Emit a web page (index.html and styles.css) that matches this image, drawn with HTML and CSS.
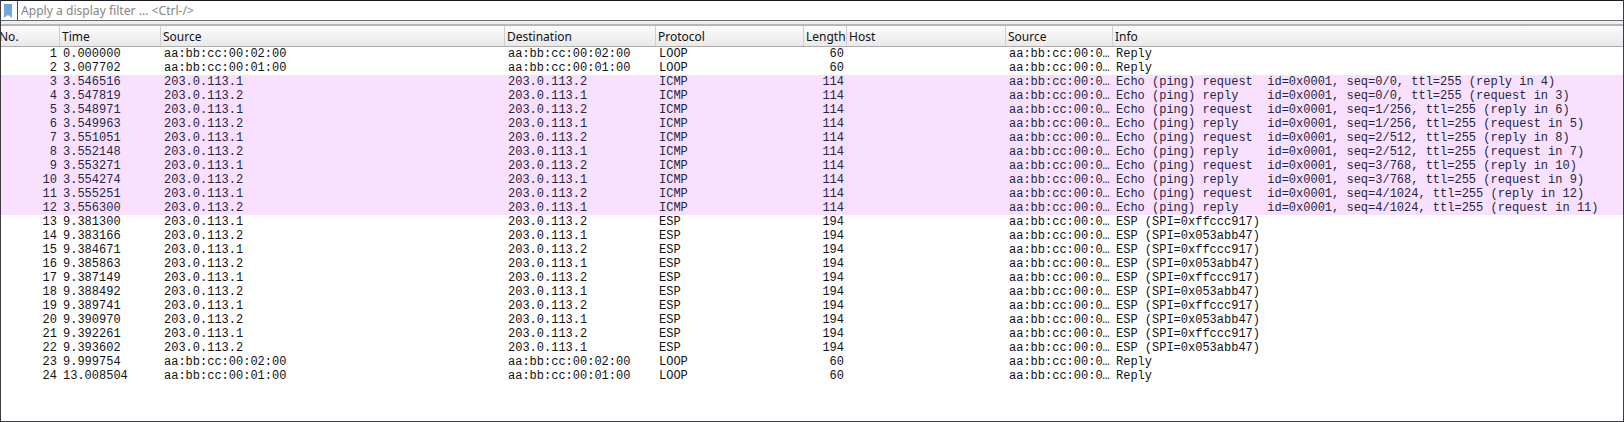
FILE: index.html
```html
<!DOCTYPE html>
<html lang="en">
<head>
<meta charset="utf-8">
<title>Packet list</title>
<link rel="stylesheet" href="styles.css">
</head>
<body>
<main class="window">
<div class="filter">
<svg class="bookmark" viewBox="0 0 8 14" width="8" height="14"><defs><linearGradient id="blue" x1="0" y1="0" x2="0" y2="1"><stop offset="0" stop-color="#6d9fd8"/><stop offset="1" stop-color="#7fabdd"/></linearGradient></defs><path d="M0 0H8V14L4 11L0 14Z" fill="url(#blue)"/></svg>
<span class="placeholder">Apply a display filter ... &lt;Ctrl-/&gt;</span>
</div>
<div class="splitter"></div>
<div class="row head"><span class="no">No.</span><span>Time</span><span>Source</span><span>Destination</span><span>Protocol</span><span>Length</span><span>Host</span><span>Source</span><span>Info</span></div>
<div class="row"><span class="num">1</span><span>0.000000</span><span>aa:bb:cc:00:02:00</span><span>aa:bb:cc:00:02:00</span><span>LOOP</span><span class="num">60</span><span></span><span>aa:bb:cc:00:0…</span><span>Reply</span></div>
<div class="row"><span class="num">2</span><span>3.007702</span><span>aa:bb:cc:00:01:00</span><span>aa:bb:cc:00:01:00</span><span>LOOP</span><span class="num">60</span><span></span><span>aa:bb:cc:00:0…</span><span>Reply</span></div>
<div class="row icmp"><span class="num">3</span><span>3.546516</span><span>203.0.113.1</span><span>203.0.113.2</span><span>ICMP</span><span class="num">114</span><span></span><span>aa:bb:cc:00:0…</span><span>Echo (ping) request  id=0x0001, seq=0/0, ttl=255 (reply in 4)</span></div>
<div class="row icmp"><span class="num">4</span><span>3.547819</span><span>203.0.113.2</span><span>203.0.113.1</span><span>ICMP</span><span class="num">114</span><span></span><span>aa:bb:cc:00:0…</span><span>Echo (ping) reply    id=0x0001, seq=0/0, ttl=255 (request in 3)</span></div>
<div class="row icmp"><span class="num">5</span><span>3.548971</span><span>203.0.113.1</span><span>203.0.113.2</span><span>ICMP</span><span class="num">114</span><span></span><span>aa:bb:cc:00:0…</span><span>Echo (ping) request  id=0x0001, seq=1/256, ttl=255 (reply in 6)</span></div>
<div class="row icmp"><span class="num">6</span><span>3.549963</span><span>203.0.113.2</span><span>203.0.113.1</span><span>ICMP</span><span class="num">114</span><span></span><span>aa:bb:cc:00:0…</span><span>Echo (ping) reply    id=0x0001, seq=1/256, ttl=255 (request in 5)</span></div>
<div class="row icmp"><span class="num">7</span><span>3.551051</span><span>203.0.113.1</span><span>203.0.113.2</span><span>ICMP</span><span class="num">114</span><span></span><span>aa:bb:cc:00:0…</span><span>Echo (ping) request  id=0x0001, seq=2/512, ttl=255 (reply in 8)</span></div>
<div class="row icmp"><span class="num">8</span><span>3.552148</span><span>203.0.113.2</span><span>203.0.113.1</span><span>ICMP</span><span class="num">114</span><span></span><span>aa:bb:cc:00:0…</span><span>Echo (ping) reply    id=0x0001, seq=2/512, ttl=255 (request in 7)</span></div>
<div class="row icmp"><span class="num">9</span><span>3.553271</span><span>203.0.113.1</span><span>203.0.113.2</span><span>ICMP</span><span class="num">114</span><span></span><span>aa:bb:cc:00:0…</span><span>Echo (ping) request  id=0x0001, seq=3/768, ttl=255 (reply in 10)</span></div>
<div class="row icmp"><span class="num">10</span><span>3.554274</span><span>203.0.113.2</span><span>203.0.113.1</span><span>ICMP</span><span class="num">114</span><span></span><span>aa:bb:cc:00:0…</span><span>Echo (ping) reply    id=0x0001, seq=3/768, ttl=255 (request in 9)</span></div>
<div class="row icmp"><span class="num">11</span><span>3.555251</span><span>203.0.113.1</span><span>203.0.113.2</span><span>ICMP</span><span class="num">114</span><span></span><span>aa:bb:cc:00:0…</span><span>Echo (ping) request  id=0x0001, seq=4/1024, ttl=255 (reply in 12)</span></div>
<div class="row icmp"><span class="num">12</span><span>3.556300</span><span>203.0.113.2</span><span>203.0.113.1</span><span>ICMP</span><span class="num">114</span><span></span><span>aa:bb:cc:00:0…</span><span>Echo (ping) reply    id=0x0001, seq=4/1024, ttl=255 (request in 11)</span></div>
<div class="row"><span class="num">13</span><span>9.381300</span><span>203.0.113.1</span><span>203.0.113.2</span><span>ESP</span><span class="num">194</span><span></span><span>aa:bb:cc:00:0…</span><span>ESP (SPI=0xffccc917)</span></div>
<div class="row"><span class="num">14</span><span>9.383166</span><span>203.0.113.2</span><span>203.0.113.1</span><span>ESP</span><span class="num">194</span><span></span><span>aa:bb:cc:00:0…</span><span>ESP (SPI=0x053abb47)</span></div>
<div class="row"><span class="num">15</span><span>9.384671</span><span>203.0.113.1</span><span>203.0.113.2</span><span>ESP</span><span class="num">194</span><span></span><span>aa:bb:cc:00:0…</span><span>ESP (SPI=0xffccc917)</span></div>
<div class="row"><span class="num">16</span><span>9.385863</span><span>203.0.113.2</span><span>203.0.113.1</span><span>ESP</span><span class="num">194</span><span></span><span>aa:bb:cc:00:0…</span><span>ESP (SPI=0x053abb47)</span></div>
<div class="row"><span class="num">17</span><span>9.387149</span><span>203.0.113.1</span><span>203.0.113.2</span><span>ESP</span><span class="num">194</span><span></span><span>aa:bb:cc:00:0…</span><span>ESP (SPI=0xffccc917)</span></div>
<div class="row"><span class="num">18</span><span>9.388492</span><span>203.0.113.2</span><span>203.0.113.1</span><span>ESP</span><span class="num">194</span><span></span><span>aa:bb:cc:00:0…</span><span>ESP (SPI=0x053abb47)</span></div>
<div class="row"><span class="num">19</span><span>9.389741</span><span>203.0.113.1</span><span>203.0.113.2</span><span>ESP</span><span class="num">194</span><span></span><span>aa:bb:cc:00:0…</span><span>ESP (SPI=0xffccc917)</span></div>
<div class="row"><span class="num">20</span><span>9.390970</span><span>203.0.113.2</span><span>203.0.113.1</span><span>ESP</span><span class="num">194</span><span></span><span>aa:bb:cc:00:0…</span><span>ESP (SPI=0x053abb47)</span></div>
<div class="row"><span class="num">21</span><span>9.392261</span><span>203.0.113.1</span><span>203.0.113.2</span><span>ESP</span><span class="num">194</span><span></span><span>aa:bb:cc:00:0…</span><span>ESP (SPI=0xffccc917)</span></div>
<div class="row"><span class="num">22</span><span>9.393602</span><span>203.0.113.2</span><span>203.0.113.1</span><span>ESP</span><span class="num">194</span><span></span><span>aa:bb:cc:00:0…</span><span>ESP (SPI=0x053abb47)</span></div>
<div class="row"><span class="num">23</span><span>9.999754</span><span>aa:bb:cc:00:02:00</span><span>aa:bb:cc:00:02:00</span><span>LOOP</span><span class="num">60</span><span></span><span>aa:bb:cc:00:0…</span><span>Reply</span></div>
<div class="row"><span class="num">24</span><span>13.008504</span><span>aa:bb:cc:00:01:00</span><span>aa:bb:cc:00:01:00</span><span>LOOP</span><span class="num">60</span><span></span><span>aa:bb:cc:00:0…</span><span>Reply</span></div>
</main>
</body>
</html>
```
FILE: styles.css
```css
* { box-sizing: border-box; }
body { margin: 0; background: #fff; }
.window {
  width: 1624px;
  height: 422px;
  border: 1px solid #3c3b40;
  border-top-color: #1c1b20;
  background: #fff;
  overflow: hidden;
}
.filter {
  display: flex;
  align-items: center;
  height: 20px;
  border-bottom: 1px solid #6e6c6c;
  font: 12.1px/19px "Noto Sans", sans-serif;
  color: #858585;
}
.bookmark { margin: 0 5px 0 3px; flex: none; }
.placeholder {
  align-self: stretch;
  border-left: 1px solid #4c4c4c;
  padding-left: 3px;
  white-space: pre;
}
.splitter {
  height: 5px;
  background: #efefef;
  border-top: 0;
  border-bottom: 2px solid #b7b7b7;
}
.row {
  display: grid;
  grid-template-columns: 59px 101px 344px 151px 148px 43px 159px 107px 1fr;
  height: 14px;
  font: 12px/14px "Liberation Mono", monospace;
  color: #121212;
}
.row > span {
  padding-left: 3px;
  white-space: pre;
  overflow: hidden;
}
.row > .num { text-align: right; padding: 0 3px 0 0; }
.icmp { background: #fae0ff; color: #22283f; }
.head {
  height: 21px;
  background: linear-gradient(#fbfbfb, #e9e9e9);
  border-bottom: 1px solid #acacac;
  font: 12px/22px "Noto Sans", sans-serif;
}
.head > span { padding-left: 2px; border-right: 1px solid #cfcfcf; }
.head > .no { padding-left: 0; text-indent: -2px; }
.head > span:last-child { border-right: 0; }
```
